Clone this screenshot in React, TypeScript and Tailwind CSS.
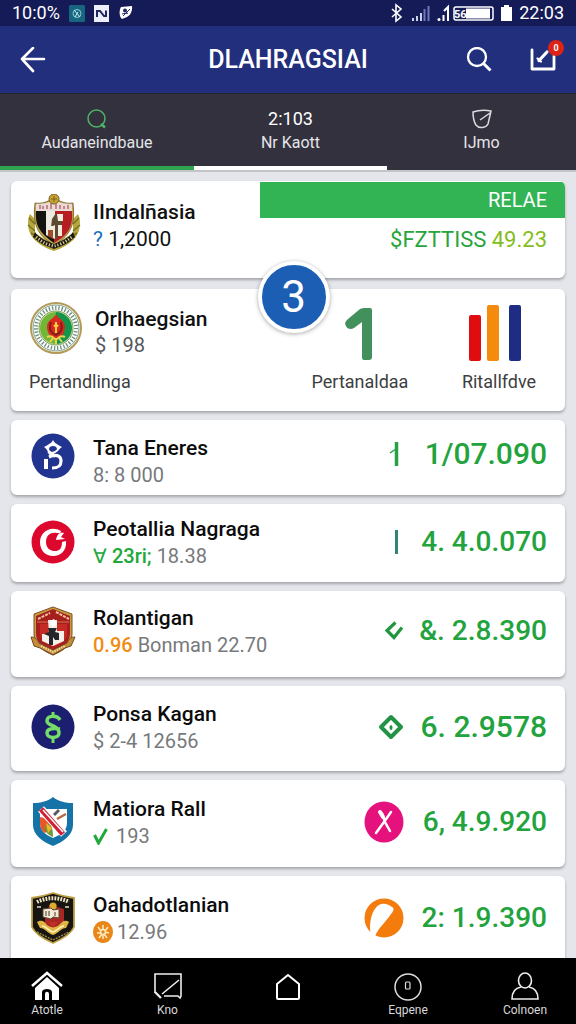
import type { ReactNode } from "react";

function BackIcon() {
  return (
    <svg viewBox="0 0 26 26" className="size-[26px]" fill="none" stroke="currentColor" strokeWidth="2.6" strokeLinecap="round" strokeLinejoin="round" aria-hidden="true">
      <path d="M24 12H2M13 1 2 12l11 12" />
    </svg>
  );
}

function SearchIcon() {
  return (
    <svg viewBox="0 0 26 26" className="size-[26px]" fill="none" stroke="currentColor" strokeWidth="2.3" aria-hidden="true">
      <circle cx="11" cy="10" r="9" />
      <path d="m17.500 16.500 7 7" strokeWidth="3" />
    </svg>
  );
}

function ComposeIcon() {
  return (
    <svg viewBox="0 0 28 26" className="h-[26px] w-[28px]" fill="none" stroke="currentColor" strokeLinecap="round" aria-hidden="true">
      <path d="M4 3v19h22V9" strokeWidth="2.8" strokeLinejoin="round" />
      <path d="M11 13.500 19 5" strokeWidth="3.2" />
      <path d="m9.500 11.500 3.500 3" strokeWidth="2.2" />
    </svg>
  );
}

function StatusIcons() {
  return (
    <div className="flex items-center gap-[9px]">
      <svg viewBox="0 0 16 17" className="h-[17px] w-4" aria-hidden="true">
        <rect width="16" height="17" rx="1.500" fill="#17657f" />
        <circle cx="8" cy="8.500" r="4" fill="none" stroke="#8fd0dc" />
        <path d="m5 5 6 7M6 12l3-5" stroke="#c7eef3" fill="none" />
      </svg>
      <svg viewBox="0 0 16 17" className="h-[17px] w-4" aria-hidden="true">
        <rect width="15" height="17" fill="#eceffa" />
        <path d="M3 12V6l3 0 4 5h2V5.500" stroke="#20275f" strokeWidth="2" fill="none" />
      </svg>
      <svg viewBox="0 0 14 14" className="h-[14px] w-[14px]" aria-hidden="true">
        <path d="M2 1 13 0c.5 4-1 9-5 11l-5 2C0 11 0 4 2 1Z" fill="#fff" />
        <circle cx="6" cy="4.500" r="2" fill="#20275f" />
        <path d="m4 10 7-7M3 8c2-1 5 0 6-1" stroke="#20275f" fill="none" />
      </svg>
    </div>
  );
}

function StatusRight() {
  return (
    <svg viewBox="0 0 124 20" className="h-5 w-[124px]" aria-hidden="true">
      <path d="m3 6 9 8-5 4V2l5 4-9 8" fill="none" stroke="#fff" strokeWidth="1.600" />
      <g fill="#cdd1ea">
        <rect x="23" y="15" width="2" height="3" />
        <rect x="27" y="13" width="2" height="5" />
        <rect x="31" y="10" width="2" height="8" />
      </g>
      <path d="M35.500 18V6M39.500 18V3" stroke="#7078b5" strokeWidth="2" />
      <circle cx="50" cy="16.500" r="1.500" fill="#fff" />
      <path d="M54.500 18v-6M55 8l4-4v14" stroke="#fff" strokeWidth="2" fill="none" />
      <rect x="65" y="4" width="39" height="13" rx="2" fill="none" stroke="#fff" strokeWidth="1.500" />
      <rect x="77" y="5.500" width="24" height="10" fill="#fff" />
      <text x="65" y="14.500" fontSize="11" fontWeight="700" fill="#fff" fontFamily="Roboto, sans-serif">56</text>
      <path d="M112 4h3V2h5v2h3v14h-11Z" fill="#fff" />
    </svg>
  );
}

function IndoCrest() {
  return (
    <svg viewBox="0 0 54 58" className="h-[58px] w-[54px]" aria-hidden="true">
      <path d="M3 20c-3 5-3 17 3 24 5 6 14 11 21 13 7-2 16-7 21-13 6-7 6-19 3-24l-5 5v14L27 51 8 39V25Z" fill="#b7a63a" />
      <path d="M2 24l6 6M1 31l7 6M4 39l7 4M52 24l-6 6M53 31l-7 6M50 39l-7 4" stroke="#77702a" strokeWidth="1.500" />
      <path d="M8 9c7 1 12-1 19-5 7 4 12 6 19 5 2 19 0 31-19 42C8 40 6 28 8 9Z" fill="#c3a846" stroke="#6d5930" strokeWidth=".8" />
      <path d="M9 16h18v33C11 38 8 30 9 16Z" fill="#151212" />
      <path d="M27 16h18c1 15-2 24-18 33Z" fill="#b71e22" />
      <path d="M9 10c7 0 12-1 18-4 6 3 11 4 18 4v7H9Z" fill="#eadbd6" />
      <path d="M13 11v4M16 12v3M20 11v4M24 9v6M29 10v5M33 11v4M37 12v3M41 11v4" stroke="#b66b70" strokeWidth="1.500" />
      <path d="M19 17h9v28l-9-4Z" fill="#eeeae1" />
      <path d="m25 25 4-6 3 6 3-2v8l-4 1v12l-3 1V31l-4 2Z" fill="#5c4931" />
      <path d="M30 20h6v7h-5ZM24 32h3v6h-3ZM31 31h4v11h-4Z" fill="#f3eddf" />
      <path d="M21 36h5v9l-5-3Z" fill="#9d4e28" />
      <circle cx="27" cy="5" r="5" fill="#c8a531" stroke="#776125" />
      <path d="M24 5h6M27 2v6" stroke="#7c6120" />
      <path d="M8 38c5 7 12 9 19 12 7-3 14-5 19-12l2 5c-6 6-13 9-21 12-8-3-15-6-21-12Z" fill="#1c1b16" />
      <path d="M9 43c7 6 12 8 18 9 5-1 10-3 18-9" fill="none" stroke="#d9cd91" strokeWidth="3" strokeDasharray="1.200 1.800" />
    </svg>
  );
}

function RoundSeal() {
  return (
    <svg viewBox="0 0 54 54" className="size-[54px]" aria-hidden="true">
      <circle cx="27" cy="27" r="25" fill="#fff" stroke="#b29b57" strokeWidth="2" />
      <circle cx="27" cy="27" r="23" fill="none" stroke="#7fa088" />
      <circle cx="27" cy="27" r="20" fill="none" stroke="#6b8f7c" strokeWidth="4" strokeDasharray="1.300 1.900" />
      <circle cx="27" cy="27" r="17" fill="#e8e6c1" stroke="#759b4a" />
      <path d="M27 11a16 16 0 0 0 0 32Z" fill="#72b637" />
      <path d="M27 11a16 16 0 0 1 0 32Z" fill="#11964a" />
      <path d="M27 13c2 5 8 5 9 12 0 7-3 11-9 13-6-2-9-6-9-13 1-7 7-7 9-12Z" fill="#d92a20" />
      <path d="M22 21c-3 8 1 12 5 13 5-2 7-6 5-13" fill="none" stroke="#831d18" strokeWidth="2" />
      <path d="M27 21v11M25 24l2 2 2-2" stroke="#ffcf43" strokeWidth="2" fill="none" />
      <path d="M18 36c4-2 6 0 9 3 3-3 5-5 9-3M21 41l3-4M33 41l-3-4M27 37v6" stroke="#e7d44b" strokeWidth="2" fill="none" />
    </svg>
  );
}

function BlueSeal() {
  return (
    <svg viewBox="0 0 44 46" className="h-[46px] w-11" aria-hidden="true">
      <ellipse cx="22" cy="23" rx="21.500" ry="22.500" fill="#21348f" />
      <path d="M17 19c-1-2-2-4-4-5 2-1 4-2 5-3 2-1 3-2 4-4 1 2 2 3 4 4 1 1 3 2 5 3-2 1-3 3-4 4-2 2-5 3-8 5Z" fill="#fff" />
      <path d="M18 16c0-4 8-4 8 0-1 2-3 2-5 3-2-1-3-2-3-3Z" fill="#21348f" />
      <path d="M18 24c6-3 12-2 12 4s-4 7-9 7" fill="none" stroke="#fff" strokeWidth="3.200" />
      <path d="m17 19 7 5" stroke="#fff" strokeWidth="2" />
      <path d="M13 26h4v10h-4Z" fill="#fff" />
    </svg>
  );
}

function RedSeal() {
  return (
    <svg viewBox="0 0 44 44" className="size-11" aria-hidden="true">
      <circle cx="22" cy="22" r="21.500" fill="#dc082d" />
      <path d="M30 11C20 5 9 12 9 22c0 9 6 14 13 14 8 0 14-6 13-15l-4 1c0 7-3 9-7 9-6 0-9-4-9-9 0-7 5-10 11-9l3 1Z" fill="#fff" />
      <path d="M23 14c-5 3-6 12-1 17 5-1 6-8 2-10l4-3 5-1-3-4Z" fill="#dc082d" />
      <path d="M33 13c-4-1-7 1-8 7l9-1-4-2Z" fill="#fff" />
    </svg>
  );
}

function RedCrest() {
  return (
    <svg viewBox="0 0 46 50" className="h-[50px] w-[46px]" aria-hidden="true">
      <path d="M4 8 23 1l19 7v20c0 11-9 17-19 21C13 45 4 39 4 28Z" fill="#c59b45" stroke="#815024" />
      <path d="M6 10 23 3l17 7v17c0 10-7 15-17 18C13 42 6 37 6 27Z" fill="#a71f1c" />
      <path d="M8 13 20 7M26 6l13 7" stroke="#efc6a0" strokeWidth="2" fill="none" strokeDasharray="3 1" />
      <path d="M7 16h32" stroke="#d9784e" />
      <path d="M10 18h27v11c-2 7-8 10-14 12-7-3-12-7-13-13Z" fill="#c52a24" />
      <path d="M18 14h9v11h7v10l-11 5-11-5v-7h7Z" fill="#f5f1e9" />
      <path d="M18 22h9l-2 4 4 1v7h-4l-2-3v8h-4v-9l-5-2 5-2Z" fill="#24262b" />
      <path d="m20 15 4-2 3 5-5 3Z" fill="#fff" />
      <path d="M1 31c4 0 6 2 8 6l14 7 14-7c2-4 4-6 8-6l-4 9-6 2-12 7-13-7-6-2Z" fill="#c48c37" stroke="#714a25" />
      <path d="m11 40 12 6 12-6" fill="none" stroke="#f4dba8" strokeWidth="2" strokeDasharray="1.500 1" />
    </svg>
  );
}

function DollarSeal() {
  return (
    <svg viewBox="0 0 44 46" className="h-[46px] w-11" aria-hidden="true">
      <ellipse cx="22" cy="23" rx="21.500" ry="22.500" fill="#1c1e70" />
      <path d="M22 8v5M22 34v5" fill="none" stroke="#74dc68" strokeWidth="3" />
      <path d="M29 16c-3-5-13-5-13 1 0 5 12 4 12 12 0 6-12 6-12 0 0-5 8-5 13-4" fill="none" stroke="#74dc68" strokeWidth="3.500" />
    </svg>
  );
}

function BlueShield() {
  return (
    <svg viewBox="0 0 44 50" className="h-[50px] w-11" aria-hidden="true">
      <path d="M22 0c5 4 12 6 20 6v22c0 10-10 17-20 21C12 45 2 38 2 28V6C10 6 17 4 22 0Z" fill="#1673a7" />
      <path d="M9 12h27v14c0 8-7 12-14 15C15 38 9 34 9 26Z" fill="#fff" />
      <path d="M9 20c7 1 10 5 12 11l-7 5c-3-2-5-5-5-10Z" fill="#e55728" />
      <path d="M14 30c4-6 8-2 8 10-5-2-8-5-8-10Z" fill="#6b9b38" />
      <path d="m15 26 6 5-4 5Z" fill="#f4b52c" />
      <path d="m23 18 5-5" stroke="#555b5e" strokeWidth="3" />
      <path d="m26 22 9-5" stroke="#b56b43" strokeWidth="2.500" />
      <path d="m10 12 23 25" stroke="#fff" strokeWidth="8" />
      <path d="m10 12 22 25" stroke="#ce2034" strokeWidth="5.500" />
      <path d="m12 13 20 22" stroke="#fff" strokeWidth="1.500" />
    </svg>
  );
}

function BlackCrest() {
  return (
    <svg viewBox="0 0 46 52" className="h-[52px] w-[46px]" aria-hidden="true">
      <path d="M2 6C10 5 17 3 23 1c6 2 13 4 21 5v29c-3 7-12 12-21 16C14 47 5 42 2 35Z" fill="#171512" stroke="#bd9e43" strokeWidth="1.800" />
      <path d="M7 10c10-5 22-5 32 0" fill="none" stroke="#eee4be" strokeWidth="4" strokeDasharray="1.800 1.200" />
      <path d="M7 15h4M35 15h4" stroke="#e7ddc0" strokeWidth="1.500" />
      <path d="M19 15c0-5 8-5 8 0l7 2v14l-10 9-9-8V18Z" fill="#a92622" />
      <circle cx="23" cy="14" r="3.500" fill="#dcac31" />
      <path d="m13 17 8-1 2 2 6-1v9l-6-1-2 2-8-2Z" fill="#f5ead1" stroke="#58483b" />
      <path d="M16 19v5M19 19v5M25 20v4" stroke="#7a766d" strokeWidth="1.500" />
      <path d="M7 30c5-3 8 0 10 3 4 3 8 3 12 0 3-3 6-6 10-3l-3 6c-5 0-7 5-13 7-6-2-8-7-13-7Z" fill="#e0b543" />
      <path d="M12 34c5 0 6 5 11 6 5-1 6-6 11-6" fill="none" stroke="#fff1bd" strokeWidth="1.500" />
      <path d="M18 30h10l-5 6Z" fill="#bf3024" />
      <path d="m7 40 16 8 16-8" fill="none" stroke="#94813f" strokeWidth="1.500" strokeDasharray="2 1" />
    </svg>
  );
}

type Row = {
  name: string;
  sub: ReactNode;
  crest: ReactNode;
  mark: ReactNode;
  value: string;
  className: string;
  valueClass: string;
  compact?: boolean;
};

const rows: Row[] = [
  {
    name: "Tana Eneres",
    sub: "8: 8 000",
    crest: <BlueSeal />,
    mark: (
      <svg viewBox="0 0 10 24" className="h-6 w-[10px]" aria-hidden="true">
        <path d="M7.500 0v24" stroke="#27a143" strokeWidth="3.500" />
        <path d="m1 11 6-4" stroke="#27a143" strokeWidth="1.500" />
      </svg>
    ),
    value: "1/07.090",
    className: "pt-[14px] pb-[7px]",
    valueClass: "text-[30px]",
    compact: true,
  },
  {
    name: "Peotallia Nagraga",
    sub: (
      <>
        <span className="font-medium text-[#20a83a]">∀ 23ri;</span> 18.38
      </>
    ),
    crest: <RedSeal />,
    mark: (
      <svg viewBox="0 0 10 24" className="h-6 w-[10px]" aria-hidden="true">
        <path d="M7.500 0v24" stroke="#318477" strokeWidth="3" />
      </svg>
    ),
    value: "4. 4.0.070",
    className: "pt-[11px] pb-[13px]",
    valueClass: "text-[28px]",
  },
  {
    name: "Rolantigan",
    sub: (
      <>
        <span className="font-medium text-[#ef8c13]">0.96</span> Bonman 22.70
      </>
    ),
    crest: <RedCrest />,
    mark: (
      <svg viewBox="0 0 20 20" className="-mr-[5px] size-5" fill="none" stroke="#20963d" strokeWidth="3.200" aria-hidden="true">
        <path d="M11.500 1.500 3 9.500l7 7 8-10" />
      </svg>
    ),
    value: "&. 2.8.390",
    className: "pt-[13px] pb-[19px]",
    valueClass: "text-[28px]",
  },
  {
    name: "Ponsa Kagan",
    sub: "$ 2-4 12656",
    crest: <DollarSeal />,
    mark: (
      <svg viewBox="0 0 26 26" className="-mr-[5px] size-[26px]" aria-hidden="true">
        <path d="m13 3 10 10-10 10L3 13Z" fill="none" stroke="#229345" strokeWidth="4" strokeLinejoin="round" />
        <ellipse cx="13" cy="13.500" rx="1.500" ry="2.500" fill="#229345" />
      </svg>
    ),
    value: "6. 2.9578",
    className: "pt-[14px] pb-[17px]",
    valueClass: "text-[30px]",
  },
  {
    name: "Matiora Rall",
    sub: (
      <span className="flex items-center gap-2">
        <svg viewBox="0 0 15 17" className="h-[17px] w-[15px]" aria-hidden="true">
          <path d="m1.500 7 4 8 8-14" fill="none" stroke="#20a83a" strokeWidth="3" />
        </svg>
        193
      </span>
    ),
    crest: <BlueShield />,
    mark: (
      <svg viewBox="0 0 40 42" className="-mr-[5px] h-[42px] w-10" aria-hidden="true">
        <ellipse cx="20" cy="21" rx="19.500" ry="20.500" fill="#e5127d" />
        <path d="m27 11-7 10-8 11" stroke="#fff" strokeWidth="2.500" fill="none" strokeLinecap="round" />
        <path d="M16 11c4 1 3 8 6 12l4 7" stroke="#fff" strokeWidth="2.500" fill="none" strokeLinecap="round" />
        <path d="m16 11 3 5" stroke="#fff" strokeWidth="4" strokeLinecap="round" />
      </svg>
    ),
    value: "6, 4.9.920",
    className: "pt-[15px] pb-[18px]",
    valueClass: "text-[28px]",
  },
  {
    name: "Oahadotlanian",
    sub: (
      <span className="flex items-center gap-1">
        <svg viewBox="0 0 20 22" className="h-[22px] w-5" aria-hidden="true">
          <ellipse cx="10" cy="11" rx="10" ry="11" fill="#e8861a" />
          <path d="M10 4v4M5 6l3 4M15 6l-3 4M4 12h4M12 11l4 1M6 17l3-4M14 17l-3-4M10 13v5" stroke="#ffeaba" strokeWidth="1.500" />
          <circle cx="10" cy="11" r="2.500" fill="none" stroke="#ffeaba" strokeWidth="1.500" />
        </svg>
        12.96
      </span>
    ),
    crest: <BlackCrest />,
    mark: (
      <svg viewBox="0 0 40 40" className="-mr-[5px] size-10" aria-hidden="true">
        <circle cx="20" cy="20" r="19.500" fill="#f47c0c" />
        <path d="M7 37C4 24 9 7 18 6c5-1 8 2 10 3 3 1 1 5-1 7-5 8-14 15-16 23Z" fill="#fff" />
      </svg>
    ),
    value: "2: 1.9.390",
    className: "flex-1 rounded-b-none pt-[15px] pb-[11px]",
    valueClass: "text-[28px]",
  },
];

const card = "rounded-md bg-white shadow-[0_2px_3px_rgba(0,0,0,0.28)]";

function ListRow({ row }: { row: Row }) {
  return (
    <li className={`${card} flex items-start pr-[18px] pl-[18px] ${row.className}`}>
      <div className={`flex w-12 shrink-0 items-center justify-center ${row.compact ? "h-11" : "h-[54px]"}`}>{row.crest}</div>
      <div className="min-w-0 flex-1 pl-4">
        <h2 className="text-[21px] leading-7 font-medium whitespace-nowrap text-[#0c0c0c]">{row.name}</h2>
        <div className="text-[20px] leading-[26px] whitespace-nowrap text-[#77797c]">{row.sub}</div>
      </div>
      <div className={`flex shrink-0 items-center ${row.compact ? "h-10" : "h-[54px]"}`}>
        {row.mark}
        <span className={`min-w-[148px] text-right leading-9 font-medium whitespace-nowrap text-[#22a33d] ${row.valueClass}`}>{row.value}</span>
      </div>
    </li>
  );
}

const navItems: { label: string; icon: ReactNode }[] = [
  {
    label: "Atotle",
    icon: (
      <svg viewBox="0 0 32 30" className="h-[30px] w-8" aria-hidden="true">
        <path d="M1 15 16 2l15 13" fill="none" stroke="#fff" strokeWidth="2.500" />
        <path d="m16 6 12 11v12h-7v-8c0-4-10-4-10 0v8H4V17Z" fill="#fff" />
        <path d="M14 29v-6c0-3 4-3 4 0v6Z" fill="#fff" />
      </svg>
    ),
  },
  {
    label: "Kno",
    icon: (
      <svg viewBox="0 0 32 30" className="h-[30px] w-8" fill="none" stroke="#eee" strokeWidth="1.600" aria-hidden="true">
        <path d="M3 22V3h26v22l-1 2-2-2H12M10 23 27 9" />
        <path d="m3 21 6 6" strokeWidth="2.200" />
      </svg>
    ),
  },
  {
    label: "",
    icon: (
      <svg viewBox="0 0 32 30" className="h-[30px] w-8" fill="none" stroke="#fff" strokeWidth="2" strokeLinejoin="round" aria-hidden="true">
        <path d="M16 4 5 13v14q0 1 1 1h20q1 0 1-1V13Z" />
      </svg>
    ),
  },
  {
    label: "Eqpene",
    icon: (
      <svg viewBox="0 0 32 30" className="h-[30px] w-8" fill="none" stroke="#ddd" strokeWidth="1.500" aria-hidden="true">
        <circle cx="16" cy="16" r="13" />
        <rect x="13.500" y="11" width="4.500" height="7" rx="1" strokeWidth="1.200" />
      </svg>
    ),
  },
  {
    label: "Colnoen",
    icon: (
      <svg viewBox="0 0 32 30" className="h-[30px] w-8" fill="none" stroke="#eee" strokeWidth="1.600" aria-hidden="true">
        <ellipse cx="16" cy="9.500" rx="6.500" ry="7.500" />
        <path d="M12 16c-6 1-9 5-9 12h26c0-7-3-11-9-12" />
      </svg>
    ),
  },
];

export default function App() {
  return (
    <div className="flex min-h-screen flex-col bg-[#e5e6eb] font-['Roboto',sans-serif] text-[#111]">
      <div className="flex h-[26px] items-center bg-[#151b57] pr-3 pl-3 text-white">
        <span className="text-[18px] leading-6">10:0%</span>
        <div className="flex-1 pl-[9px]">
          <StatusIcons />
        </div>
        <StatusRight />
        <span className="pl-[6px] text-[18px] leading-6">22:03</span>
      </div>

      <header className="grid h-[67px] grid-cols-[1fr_auto_1fr] items-center bg-[#222f7c] px-5 text-white">
        <button type="button" aria-label="Kembali" className="w-fit cursor-pointer">
          <BackIcon />
        </button>
        <h1 className="text-[25px] leading-8 font-medium">DLAHRAGSIAI</h1>
        <div className="flex items-center justify-end gap-9">
          <button type="button" aria-label="Cari" className="cursor-pointer">
            <SearchIcon />
          </button>
          <button type="button" aria-label="Tulis" className="relative cursor-pointer">
            <ComposeIcon />
            <span className="absolute -top-[7px] -right-2 flex size-4 items-center justify-center rounded-full bg-[#dc2316] text-[9px] leading-4 font-bold text-white">
              0
            </span>
          </button>
        </div>
      </header>

      <nav aria-label="Kategori" className="grid h-[77px] grid-cols-[194fr_193fr_189fr] border-t border-[#24232f] bg-[#32313d] text-[16px] leading-6 text-[#e5e5ea]">
        <button type="button" className="flex cursor-pointer flex-col items-center border-b-4 border-[#2fa34f] pt-[13px]">
          <svg viewBox="0 0 20 20" className="my-[2px] size-5" fill="none" stroke="#4eb568" strokeWidth="1.500" aria-hidden="true">
            <circle cx="9.500" cy="9.500" r="8.500" />
            <path d="m14 15 4 3.500" strokeWidth="2.500" />
          </svg>
          Audaneindbaue
        </button>
        <button type="button" className="flex cursor-pointer flex-col items-center border-b-4 border-white pt-[13px]">
          <span className="text-[18px] text-white">2:103</span>
          <span>Nr Kaott</span>
        </button>
        <button type="button" className="flex cursor-pointer flex-col items-center border-b-4 border-[#32313d] pt-[13px]">
          <svg viewBox="0 0 20 20" className="my-[2px] size-5" fill="none" stroke="#dcdce0" strokeWidth="1.500" aria-hidden="true">
            <path d="M1 3c6-2 12-2 18-1l-3 13c-2 4-9 5-12 1C2 13 1 8 1 3ZM8 11l10-7" />
          </svg>
          IJmo
        </button>
      </nav>

      <main className="flex flex-1 flex-col border-t-2 border-[#c3c4c8] px-[11px] pt-[9px]">
        <section className={`${card} mb-[11px] flex h-[97px] overflow-hidden`}>
          <div className="flex w-[45%] shrink-0 items-start pt-[13px] pl-4">
            <IndoCrest />
            <div className="pt-1 pl-3">
              <h2 className="text-[21px] leading-7 font-medium whitespace-nowrap">IIndalñasia</h2>
              <p className="text-[21px] leading-[26px] whitespace-nowrap">
                <span className="text-[#1f6fb8]">?</span> 1,2000
              </p>
            </div>
          </div>
          <div className="flex-1 pt-px text-right">
            <p className="bg-[#32b455] pr-[18px] text-[20px] leading-9 text-white">RELAE</p>
            <p className="pt-1 pr-[18px] text-[22px] leading-9 whitespace-nowrap text-[#27a53c]">
              $FZTTISS <span className="text-[#84bd20]">49.23</span>
            </p>
          </div>
        </section>

        <section className={`${card} relative mb-[9px] flex h-[122px]`}>
          <div className="min-w-0 flex-1 pt-3 pl-[18px]">
            <div className="flex items-start">
              <RoundSeal />
              <div className="pt-1 pl-3">
                <h2 className="text-[21px] leading-7 font-medium">Orlhaegsian</h2>
                <p className="text-[20px] leading-6 text-[#55575b]">$ 198</p>
              </div>
            </div>
            <p className="pt-[13px] text-[18px] leading-6 text-[#3d3e41]">Pertandlinga</p>
          </div>
          <div className="flex w-[146px] shrink-0 flex-col items-center pt-4">
            <svg viewBox="0 0 30 56" className="h-[56px] w-[30px]" aria-hidden="true">
              <path d="M1 21c-2-3 0-5 2-7L15 4q2-1 5-1h5q2 0 2 2v47q0 3-3 3h-5q-2 0-2-3V17l-8 6c-3 2-7 1-8-2Z" fill="#42905b" />
            </svg>
            <p className="pt-[9px] text-[18px] leading-6 text-[#3d3e41]">Pertanaldaa</p>
          </div>
          <div className="flex w-[132px] shrink-0 flex-col items-center pt-4">
            <svg viewBox="0 0 62 56" className="h-[56px] w-[62px]" aria-hidden="true">
              <rect x="1" y="10" width="12" height="46" rx="2" fill="#df0c10" />
              <rect x="19" y="0" width="12" height="56" rx="2" fill="#f48b0c" />
              <rect x="41" y="0" width="12" height="56" rx="2" fill="#1e2d83" />
            </svg>
            <p className="pt-[9px] text-[18px] leading-6 text-[#3d3e41]">Ritallfdve</p>
          </div>
          <span className="absolute -top-7 left-[51%] flex size-[72px] -translate-x-1/2 items-center justify-center rounded-full border-4 border-white bg-[#1b5eb4] text-[44px] leading-none text-white shadow-[0_1px_4px_rgba(0,0,0,0.35)]">
            3
          </span>
        </section>

        <ul className="flex flex-1 flex-col gap-[9px]">
          {rows.map((row) => (
            <ListRow key={row.name} row={row} />
          ))}
        </ul>
      </main>

      <nav aria-label="Utama" className="sticky bottom-0 grid h-[66px] grid-cols-[94fr_147fr_94fr_146fr_88fr] bg-black pr-[7px] text-[12px] leading-4 text-[#d8d8d8]">
        {navItems.map((item, i) => (
          <a key={i} href="#" aria-label={item.label || "Beranda"} className="flex flex-col items-center gap-px pt-[13px]">
            {item.icon}
            <span>{item.label}</span>
          </a>
        ))}
      </nav>
    </div>
  );
}
